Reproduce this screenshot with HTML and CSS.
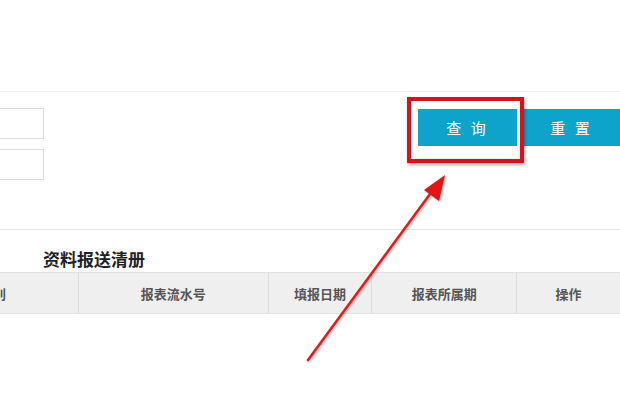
FILE: index.html
```html
<!DOCTYPE html>
<html lang="zh">
<head>
<meta charset="utf-8">
<link rel="stylesheet" href="styles.css">
</head>
<body>
<div class="page">
  <div class="top"></div>
  <div class="search">
    <div class="fields">
      <div class="field"></div>
      <div class="field"></div>
    </div>
    <div class="actions">
      <button class="btn">查 询</button>
      <button class="btn">重 置</button>
      <div class="highlight"></div>
    </div>
  </div>
  <div class="list">
    <h2 class="title">资料报送清册</h2>
    <div class="thead">
      <div class="th c1">别</div>
      <div class="th c2">报表流水号</div>
      <div class="th c3">填报日期</div>
      <div class="th c4">报表所属期</div>
      <div class="th c5">操作</div>
    </div>
  </div>
  <svg class="arrow" width="620" height="395" viewBox="0 0 620 395">
    <defs>
      <filter id="sh" x="-20%" y="-20%" width="140%" height="140%">
        <feDropShadow dx="1" dy="1" stdDeviation="1" flood-color="#000" flood-opacity="0.35"/>
      </filter>
    </defs>
    <g filter="url(#sh)">
      <line x1="308" y1="360" x2="433" y2="190" stroke="#d42020" stroke-width="2.5" stroke-linecap="round"/>
      <polygon points="445,175 439,201 424,190" fill="#e01818"/>
    </g>
  </svg>
</div>
</body>
</html>
```
FILE: styles.css
```css
* { box-sizing: border-box; }
html, body { margin: 0; padding: 0; background: #fff; }
body {
  font-family: "Noto Sans CJK SC", "Microsoft YaHei", sans-serif;
  width: 620px;
  height: 395px;
  overflow: hidden;
}
.page { position: relative; width: 620px; height: 395px; }
.top { height: 92px; border-bottom: 1px solid #ececec; }
.search {
  display: flex;
  justify-content: space-between;
  height: 138px;
  border-bottom: 1px solid #e6e6e6;
}
.fields {
  display: flex;
  flex-direction: column;
  gap: 10px;
  padding-top: 16px;
  margin-left: -2px;
}
.field {
  width: 46px;
  height: 31px;
  border: 1px solid #dedede;
  background: #fff;
}
.actions {
  position: relative;
  display: flex;
  gap: 3px;
  padding-top: 17px;
  margin-right: -3px;
}
.btn {
  width: 99px;
  height: 37px;
  border: 0;
  background: #0ea3cb;
  color: #fff;
  font-family: "Noto Sans CJK SC", sans-serif;
  font-size: 15px;
  letter-spacing: 3px;
  padding: 0;
}
.btn + .btn { width: 103px; }
.highlight {
  position: absolute;
  left: -11px;
  top: 5px;
  width: 117px;
  height: 66px;
  border: 4px solid #d0161b;
  box-shadow: 1px 2px 3px rgba(0,0,0,0.35), inset 0 0 2px rgba(0,0,0,0.2);
}
.list { padding-top: 15px; }
.title {
  margin: 0 0 0 43px;
  height: 27px;
  font-size: 17px;
  line-height: 27px;
  font-weight: bold;
  color: #222;
}
.thead {
  display: flex;
  height: 42px;
  background: #efefef;
  border-top: 1px solid #e2e2e2;
  border-bottom: 1px solid #e2e2e2;
  margin-left: -29px;
}
.th {
  display: flex;
  align-items: center;
  justify-content: center;
  font-size: 13px;
  font-weight: bold;
  color: #555;
  border-right: 1px solid #dcdcdc;
}
.c1 { width: 108px; justify-content: flex-start; padding-left: 22px; }
.c2 { width: 190px; }
.c3 { width: 104px; }
.c4 { width: 145px; }
.c5 { width: 103px; border-right: 0; }
.arrow { position: absolute; left: 0; top: 0; pointer-events: none; }
```
